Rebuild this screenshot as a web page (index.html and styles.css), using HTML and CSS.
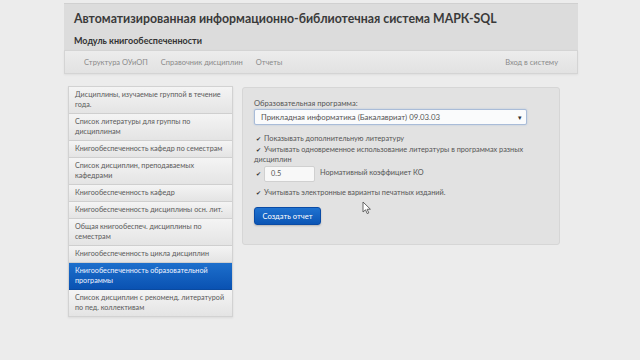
FILE: index.html
```html
<!DOCTYPE html>
<html lang="ru">
<head>
<meta charset="utf-8">
<link rel="stylesheet" href="styles.css">
</head>
<body>
<div class="page">
  <header class="header">
    <div class="brand">
      <h1 class="title">Автоматизированная информационно-библиотечная система МАРК-SQL</h1>
      <div class="subtitle">Модуль книгообеспеченности</div>
    </div>
    <nav class="nav">
      <div class="nav-left">
        <a class="nav-link">Структура ОУиОП</a>
        <a class="nav-link">Справочник дисциплин</a>
        <a class="nav-link">Отчеты</a>
      </div>
      <a class="nav-link">Вход в систему</a>
    </nav>
  </header>
  <main class="main">
    <ul class="menu">
      <li class="menu-item">Дисциплины, изучаемые группой в течение года.</li>
      <li class="menu-item">Список литературы для группы по дисциплинам</li>
      <li class="menu-item">Книгообеспеченность кафедр по семестрам</li>
      <li class="menu-item">Список дисциплин, преподаваемых кафедрами</li>
      <li class="menu-item">Книгообеспеченность кафедр</li>
      <li class="menu-item">Книгообеспеченность дисциплины осн. лит.</li>
      <li class="menu-item">Общая книгообеспеч. дисциплины по семестрам</li>
      <li class="menu-item">Книгообеспеченность цикла дисциплин</li>
      <li class="menu-item active">Книгообеспеченность образовательной программы</li>
      <li class="menu-item">Список дисциплин с рекоменд. литературой по пед. коллективам</li>
    </ul>
    <section class="panel">
      <div class="field-label">Образовательная программа:</div>
      <div class="select">
        <span>Прикладная информатика (Бакалавриат) 09.03.03</span>
        <span class="caret">▾</span>
      </div>
      <div class="checks">
        <div class="check"><span class="box">✔</span><span>Показывать дополнительную литературу</span></div>
        <div class="check"><span class="box">✔</span><span>Учитывать одновременное использование литературы в программах разных</span></div>
        <div class="wrap">дисциплин</div>
        <div class="check coef"><span class="box">✔</span><span class="input">0.5</span><span>Нормативный коэффициет КО</span></div>
        <div class="check"><span class="box">✔</span><span>Учитывать электронные варианты печатных изданий.</span></div>
      </div>
      <button class="btn">Создать отчет</button>
      <svg class="cursor" width="10" height="14" viewBox="0 0 10 14"><path d="M1 1 L1 11 L3.5 8.8 L5.2 12.6 L6.8 11.9 L5.1 8.3 L8.4 8.2 Z" fill="#fff" stroke="#555" stroke-width="0.9" stroke-linejoin="round"/></svg>
    </section>
  </main>
</div>
</body>
</html>
```
FILE: styles.css
```css
* { box-sizing: border-box; }
html, body { margin: 0; padding: 0; }
body {
  background: #ececec;
  font-family: Lato, "Open Sans", sans-serif;
  color: #555;
  width: 640px;
  height: 360px;
  overflow: hidden;
}
.page {
  width: 514px;
  margin-left: 64px;
  padding-top: 3px;
}
.header {
  background: #dcdcdc;
  border-top: 1px solid #d0d0d0;
}
.brand {
  padding: 7px 10px 4px;
}
.title {
  margin: 0;
  font-size: 12.3px;
  font-weight: 700;
  color: #3a3a3a;
  line-height: 16px;
  white-space: nowrap;
}
.subtitle {
  margin-top: 8px;
  font-size: 9px;
  font-weight: 700;
  color: #333;
  line-height: 11px;
}
.nav {
  display: flex;
  justify-content: space-between;
  align-items: center;
  height: 24px;
  background: linear-gradient(#ececec, #e2e2e2);
  border: 1px solid #d4d4d4;
  padding: 0 19px;
  box-shadow: 0 1px 2px rgba(0,0,0,0.06);
}
.nav-left {
  display: flex;
  gap: 13px;
}
.nav-link {
  font-size: 7.5px;
  color: #8a8a8a;
  white-space: nowrap;
}
.main {
  display: flex;
  align-items: flex-start;
  margin-top: 12px;
  padding-left: 4px;
  gap: 9px;
}
.menu {
  list-style: none;
  margin: 0;
  padding: 0;
  width: 165px;
  border: 1px solid #d2d2d2;
  box-shadow: 0 1px 2px rgba(0,0,0,0.08);
}
.menu-item {
  font-size: 7.2px;
  line-height: 10px;
  padding: 3px 5px 3px 6px;
  color: #5a5a5a;
  background: linear-gradient(#f4f4f4, #e4e4e4);
  border-bottom: 1px solid #cfcfcf;
}
.menu-item:last-child { border-bottom: 0; }
.menu-item.active {
  background: linear-gradient(#1d6fcc, #0a52b2);
  color: #f0f4ff;
  border-bottom-color: #0a4aa0;
}
.panel {
  position: relative;
  width: 318px;
  height: 158px;
  margin-top: 1px;
  background: #e2e2e2;
  border: 1px solid #d6d6d6;
  border-radius: 3px;
  padding: 10px 10px 0 11px;
}
.field-label {
  font-size: 7.6px;
  line-height: 10px;
  color: #555;
}
.select {
  margin-top: 1px;
  width: 273px;
  height: 16px;
  background: #fafbfc;
  border: 1px solid #a9bcd8;
  border-radius: 2px;
  box-shadow: 0 0 2px rgba(90,140,210,0.35);
  display: flex;
  justify-content: space-between;
  align-items: center;
  padding: 0 4px 0 6px;
  font-size: 7.8px;
  color: #555;
}
.caret { font-size: 7px; color: #333; }
.checks {
  margin-top: 9px;
  font-size: 7.3px;
  line-height: 10.5px;
  color: #555;
  white-space: nowrap;
}
.check {
  display: flex;
  align-items: center;
  gap: 3px;
  padding-left: 1px;
}
.box {
  width: 6px;
  height: 6px;
  font-size: 6px;
  line-height: 6px;
  color: #333;
  text-align: center;
}
.coef {
  margin-top: 0;
  margin-bottom: 6px;
}
.input {
  width: 51px;
  height: 16px;
  background: #f8f8f8;
  border: 1px solid #d0d0d0;
  border-radius: 2px;
  padding: 0 6px;
  line-height: 14px;
  margin-right: 2px;
}
.btn {
  margin-top: 9px;
  width: 67px;
  height: 18px;
  border: 1px solid #0a4ba5;
  border-radius: 3px;
  background: linear-gradient(#1f72d0, #0b55b5);
  color: #fff;
  font-family: inherit;
  font-size: 7.6px;
  padding: 0;
  box-shadow: 0 1px 2px rgba(0,0,0,0.2);
}
.cursor {
  position: absolute;
  left: 119px;
  top: 113px;
}
```
